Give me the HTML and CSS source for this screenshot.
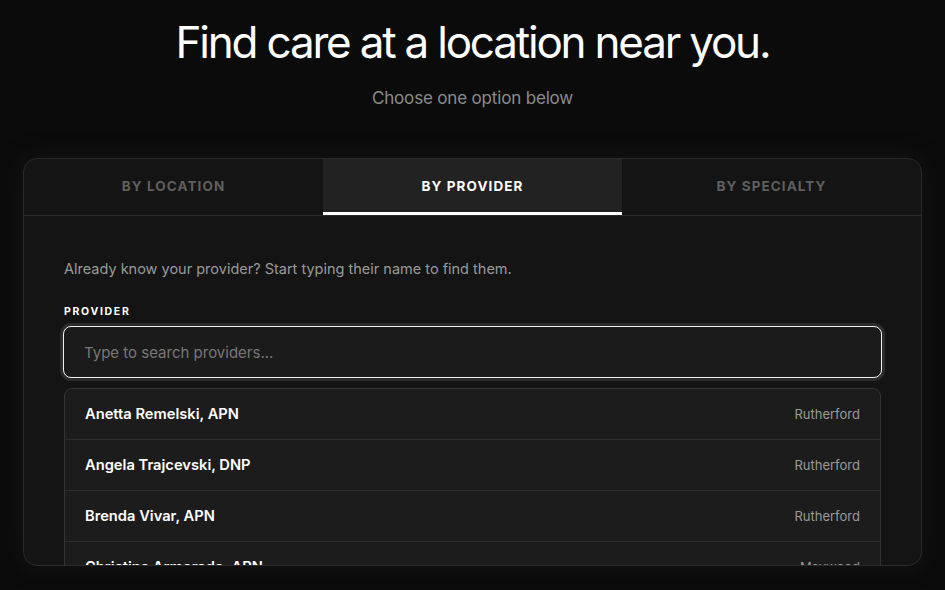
FILE: index.html
```html
<!DOCTYPE html>
<html lang="en">
<head>
<meta charset="utf-8">
<title>Find care</title>
<link rel="stylesheet" href="styles.css">
</head>
<body>
<main class="page">
  <header class="hero">
    <h1 class="hero-title">Find care at a location near you.</h1>
    <p class="hero-sub">Choose one option below</p>
  </header>
  <section class="card">
    <nav class="tabs">
      <div class="tab">By Location</div>
      <div class="tab tab-active">By Provider</div>
      <div class="tab">By Specialty</div>
    </nav>
    <div class="panel">
      <p class="panel-intro">Already know your provider? Start typing their name to find them.</p>
      <label class="field-label" for="provider">Provider</label>
      <div class="input-ring">
        <input id="provider" class="search-input" type="text" placeholder="Type to search providers...">
      </div>
      <ul class="results">
        <li class="result"><span class="result-name">Anetta Remelski, APN</span><span class="result-loc">Rutherford</span></li>
        <li class="result"><span class="result-name">Angela Trajcevski, DNP</span><span class="result-loc">Rutherford</span></li>
        <li class="result"><span class="result-name">Brenda Vivar, APN</span><span class="result-loc">Rutherford</span></li>
        <li class="result"><span class="result-name">Christina Armorada, APN</span><span class="result-loc">Maywood</span></li>
      </ul>
    </div>
  </section>
</main>
</body>
</html>
```

FILE: styles.css
```css
* { box-sizing: border-box; }
html, body { margin: 0; padding: 0; }
body {
  background: #0b0b0b;
  color: #fff;
  font-family: Inter, "Noto Sans", "Liberation Sans", sans-serif;
  height: 590px;
  overflow: hidden;
}
.page {
  display: flex;
  flex-direction: column;
  align-items: center;
  padding: 14px 23px 0;
}
.hero { text-align: center; }
.hero-title {
  margin: 0;
  font-size: 44px;
  font-weight: 400;
  letter-spacing: -0.05em;
  line-height: 56px;
  color: #fff;
}
.hero-sub {
  margin: 17px 0 0;
  font-size: 17px;
  line-height: 22px;
  color: #8c8c8c;
  letter-spacing: -0.01em;
}
.card {
  margin-top: 49px;
  width: 899px;
  height: 408px;
  background: #141414;
  border: 1px solid #2a2a2a;
  border-radius: 14px;
  overflow: hidden;
  box-shadow: 0 0 24px rgba(40, 40, 40, 0.35);
}
.tabs {
  display: grid;
  grid-template-columns: 1fr 1fr 1fr;
  border-bottom: 1px solid #2a2a2a;
  height: 57px;
}
.tab {
  display: flex;
  align-items: center;
  justify-content: center;
  text-transform: uppercase;
  font-size: 13.5px;
  font-weight: 700;
  letter-spacing: 0.08em;
  color: #5f5f5f;
  border-bottom: 3px solid transparent;
  padding-top: 1px;
}
.tab-active {
  background: #222;
  color: #fff;
  border-bottom-color: #fff;
}
.panel {
  padding: 43px 40px 0;
}
.panel-intro {
  margin: 0;
  font-size: 14.5px;
  line-height: 20px;
  color: #9a9a9a;
}
.field-label {
  display: block;
  margin-top: 26px;
  font-size: 10.5px;
  font-weight: 700;
  letter-spacing: 0.16em;
  text-transform: uppercase;
  color: #fff;
  line-height: 14px;
}
.input-ring {
  margin-top: 4px;
  margin-left: -4px;
  margin-right: -4px;
  padding: 3px;
  border-radius: 11px;
  background: #2c2c2c;
}
.search-input {
  display: block;
  width: 100%;
  height: 52px;
  background: #1b1b1b;
  border: 1.5px solid #f2f2f2;
  border-radius: 8px;
  padding: 0 20px;
  font-family: inherit;
  font-size: 15px;
  color: #fff;
  outline: none;
}
.search-input::placeholder { color: #777; }
.results {
  list-style: none;
  margin: 7px 0 0;
  padding: 0;
  background: #1c1c1c;
  border: 1px solid #333;
  border-radius: 8px;
}
.result {
  display: flex;
  align-items: center;
  justify-content: space-between;
  height: 51px;
  padding: 0 20px;
  border-top: 1px solid #2e2e2e;
}
.result:first-child { border-top: 0; height: 50px; }
.result-name {
  font-size: 14.7px;
  font-weight: 600;
  color: #fff;
}
.result-loc {
  font-size: 13px;
  color: #9a9a9a;
}
```
